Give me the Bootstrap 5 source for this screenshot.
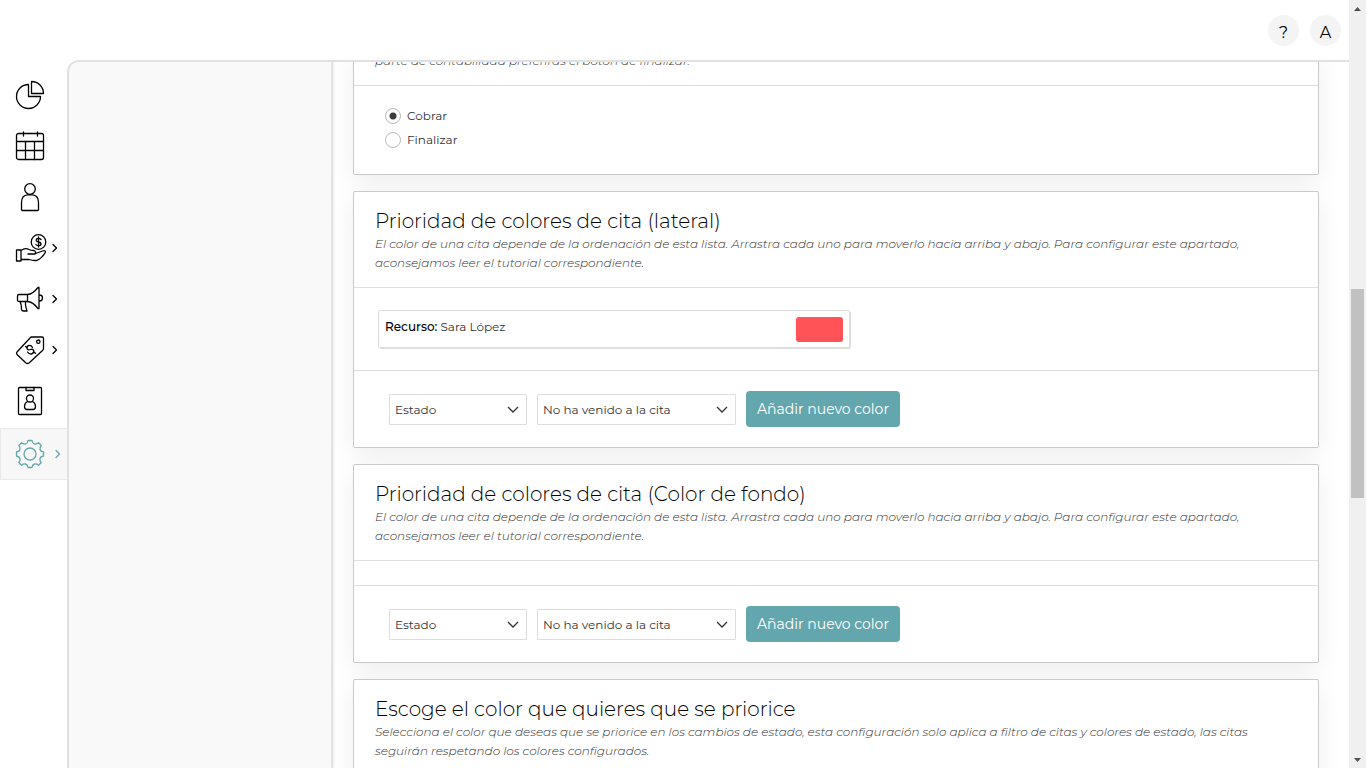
<!DOCTYPE html>
<html lang="es">
<head>
<meta charset="utf-8">
<meta name="viewport" content="width=device-width, initial-scale=1">
<title>Configuración de citas</title>
<link href="https://cdn.jsdelivr.net/npm/bootstrap@5.3.0/dist/css/bootstrap.min.css" rel="stylesheet">
<style>
  body { font-family: Montserrat, Inter, "Liberation Sans", sans-serif; font-size: 12px; color: #333; background: #fff; }
  .topbar { height: 60px; padding-right: 8px; gap: 11px; }
  .round-btn { width: 31px; height: 31px; border: 0; border-radius: 50%; background: #f4f4f4; color: #000; font-size: 16px; line-height: 31px; padding: 2px 0 0; }
  .side { width: 67px; padding-top: 9px; }
  .side a { height: 51px; padding-left: 15px; gap: 5px; color: #000; }
  .side a.active { height: 52px; margin-top: 2px; padding-left: 14px; gap: 8px; color: #64a6ad; background: #f7f7f7; border: 1px solid #e9e9e9; border-right: 0; }
  .side svg { flex: none; fill: none; stroke: currentColor; stroke-width: 1.3; stroke-linejoin: round; stroke-linecap: round; }
  .panel { min-width: 0; border: solid #e1e1e1; border-width: 2px 0 0 2px; border-top-left-radius: 12px; overflow: hidden; }
  .submenu { width: 264px; background: #f9f9f9; border-right: 2px solid #e3e3e3; box-shadow: 0 0 3px #ddd; }
  .stack { min-width: 0; padding: 0 30px 0 20px; overflow: hidden; }
  .stack-scroll { margin-top: -12px; gap: 16px; }
  .block { flex: none; border: 1px solid #c9c9c9; border-radius: 2px; background: #fff; box-shadow: 0 8px 26px rgba(0,0,0,.07); }
  .block-head { padding: 16px 21px 15px; }
  .block-head.cut { padding-top: 0; }
  .block h2 { margin: 0; font-size: 20px; line-height: 26px; font-weight: 300; color: #000; }
  .block p { margin: 0; font-size: 12px; line-height: 19px; font-weight: 300; font-style: italic; color: #333; }
  .block-list, .block-foot, .block-radios { border-top: 1px solid #dedede; }
  .block-list { padding: 12px 24px; }
  .block-foot { padding: 20px 35px; gap: 10px; }
  .block-radios { padding: 18px 31px 22px; }
  .choice { height: 24px; gap: 6px; }
  .choice .form-check-input { width: 16px; height: 16px; margin: 0; border: 1px solid #bbb; background-color: #fff; }
  .choice .form-check-input:checked { background-image: radial-gradient(circle, #3c3c3c 3px, transparent 4px); }
  .color-item { width: 472px; max-width: 100%; height: 38px; margin: 10px 0; padding: 0 6px; border: 1px solid #ddd; border-radius: 2px; box-shadow: 1px 1px 0 #ddd; }
  .color-item strong { font-weight: 500; color: #000; }
  .color-item span { font-weight: 400; padding-bottom: 4px; }
  .swatch { width: 47px; height: 25px; border: 0; border-radius: 3px; background: #ff5358; }
  .pick { height: 31px; padding: 0 24px 0 5px; border: 1px solid #ddd; border-radius: 1px; font-size: 12px; line-height: 29px; font-weight: 400; color: #333; background-image: url("data:image/svg+xml,%3csvg xmlns='http://www.w3.org/2000/svg' viewBox='0 0 12 12'%3e%3cpath fill='none' stroke='%23333' stroke-width='1.3' d='M1 4l5 5 5-5'/%3e%3c/svg%3e"); background-position: right 7px center; background-size: 12px; }
  .pick-kind { width: 138px; }
  .pick-value { width: 199px; }
  .btn-add { width: 154px; height: 36px; padding: 0; border: 0; border-radius: 4px; background: #64a6ad; color: #fff; font-size: 14px; white-space: nowrap; }
  .btn-add:hover { background: #568f96; color: #fff; }
  .track { width: 17px; background: #f0f0f0; }
  .track i { position: relative; flex: none; height: 17px; }
  .track i::before { content: ""; display: block; margin: 7px auto 0; width: 7px; height: 4px; background: #505050; clip-path: polygon(50% 0, 100% 100%, 0 100%); }
  .track i.down::before { clip-path: polygon(0 0, 100% 0, 50% 100%); }
  .track-rail { padding: 0 2px; }
  .track-thumb { background: #c1c1c1; }
</style>
</head>
<body class="vh-100 overflow-hidden d-flex">
<div class="d-flex flex-column flex-grow-1 overflow-hidden">
  <header class="topbar d-flex flex-shrink-0 align-items-center justify-content-end">
    <button class="round-btn" type="button" title="Ayuda">?</button>
    <button class="round-btn" type="button" title="Cuenta">A</button>
  </header>
  <div class="d-flex flex-grow-1 overflow-hidden">
    <nav class="side flex-shrink-0" aria-label="Principal">
      <a href="#" class="d-flex align-items-center" aria-label="Informes">
        <svg width="30" height="30" viewBox="0 0 30 30"><path d="M13.500 4.500A12 12 0 1 0 25.500 16.500H13.500ZM16.500 1.500V13.500H28.500A12 12 0 0 0 16.500 1.500Z"/></svg>
      </a>
      <a href="#" class="d-flex align-items-center" aria-label="Agenda">
        <svg width="30" height="30" viewBox="0 0 30 30"><rect x="1.500" y="2.500" width="27" height="26" rx="2"/><path d="M1.500 10.500H28.500M1.500 19.500H28.500M10.500 10.500V28.500M19.500 10.500V28.500M8.500 1V5M22.500 1V5"/></svg>
      </a>
      <a href="#" class="d-flex align-items-center" aria-label="Clientes">
        <svg width="30" height="30" viewBox="0 0 30 30"><circle cx="15" cy="7" r="5.300"/><path d="M6.500 28V21Q6.500 13 12.500 12.800H17.500Q23.500 13 23.500 21V28Q23.500 28.500 22.500 28.500H7.500Q6.500 28.500 6.500 28Z"/></svg>
      </a>
      <a href="#" class="d-flex align-items-center" aria-label="Ventas">
        <svg width="32" height="30" viewBox="0 0 32 30"><circle cx="23.500" cy="9" r="7.300"/><path d="M26 6.500Q25 5.400 23.500 5.400Q21.200 5.400 21.200 7.200Q21.200 8.600 23.500 9Q26 9.400 26 11Q26 12.700 23.500 12.700Q21.700 12.700 20.900 11.500M23.500 4V14M1.500 17H6V28H1.500ZM6 17.500Q10 14.500 14 16.500Q16 17.600 19 17.500Q21.500 18.500 20 21H13M20.500 20.500L27.500 18Q30.500 17 30.500 19Q27 25.500 22 27.300Q19 28 14 26.500H6"/></svg>
        <svg width="6" height="10" viewBox="0 0 6 10"><path d="M1 1.500L4.500 5L1 8.500"/></svg>
      </a>
      <a href="#" class="d-flex align-items-center" aria-label="Marketing">
        <svg width="32" height="30" viewBox="0 0 32 30"><path d="M4 10.500H12.500V17.500H4Q2.500 17.500 2.500 16V12Q2.500 10.500 4 10.500ZM12.500 10.500Q18 10 22.500 4Q24 2.500 24 4V24Q24 25.500 22.500 24Q18 18 12.500 17.500M24.500 11Q27.500 11 27.500 14T24.500 17M5 17.500Q6.500 20 6.500 25.500Q7 27 8.500 27H12Q11 24 10.500 21V17.500"/></svg>
        <svg width="6" height="10" viewBox="0 0 6 10"><path d="M1 1.500L4.500 5L1 8.500"/></svg>
      </a>
      <a href="#" class="d-flex align-items-center" aria-label="Bonos y tarifas">
        <svg width="32" height="30" viewBox="0 0 32 30"><path d="M16.500 2H27Q28.500 2 28.500 3.500V13.500Q28.500 14.500 27.500 15.500L14 28Q12.500 29 11 28L2 19.500Q1 18 2 17L15 3Q15.700 2 16.500 2Z"/><circle cx="23.300" cy="6.700" r="1.700"/><path d="M17.500 12.500Q16 9.800 13.200 10.600Q11 12 12.200 14Q13.500 15.300 15.500 14.500Q18 13.700 18.800 15.800Q19 18.300 16.500 19Q14 19.200 12.500 17M10.500 11.500L12.300 12.600M18.700 17L20.500 18.300"/></svg>
        <svg width="6" height="10" viewBox="0 0 6 10"><path d="M1 1.500L4.500 5L1 8.500"/></svg>
      </a>
      <a href="#" class="d-flex align-items-center" aria-label="Personal">
        <svg width="30" height="30" viewBox="0 0 30 30"><rect x="3.500" y="1.500" width="23" height="27" rx="1"/><path d="M11 1.500V4.500H19V1.500"/><circle cx="15" cy="12.500" r="3.500"/><path d="M12.500 15.500Q9.500 17 9.500 20.500Q9.500 23.500 12 23.500H18Q20.500 23.500 20.500 20.500Q20.500 17 17.500 15.500"/></svg>
      </a>
      <a href="#" class="active d-flex align-items-center" aria-label="Configuración" aria-current="page">
        <svg width="32" height="30" viewBox="0 0 32 30"><circle cx="15" cy="15" r="6"/><path d="M13 1.500H17Q17.500 4.500 19.500 5Q21.500 5.500 23.500 3.800L26.200 6.500Q24.500 8.500 25 10.500Q25.500 12.500 28.500 13V17Q25.500 17.500 25 19.500Q24.500 21.500 26.200 23.500L23.500 26.200Q21.500 24.500 19.500 25Q17.500 25.500 17 28.500H13Q12.500 25.500 10.500 25Q8.500 24.500 6.500 26.200L3.800 23.500Q5.500 21.500 5 19.500Q4.500 17.500 1.500 17V13Q4.500 12.500 5 10.500Q5.500 8.500 3.800 6.500L6.500 3.800Q8.500 5.500 10.500 5Q12.500 4.500 13 1.500Z"/></svg>
        <svg width="6" height="10" viewBox="0 0 6 10"><path d="M1 1.500L4.500 5L1 8.500"/></svg>
      </a>
    </nav>
    <div class="panel d-flex flex-grow-1">
      <aside class="submenu flex-shrink-0"></aside>
      <main class="stack flex-grow-1">
        <div class="stack-scroll d-flex flex-column">
          <section class="block">
            <div class="block-head cut"><p>parte de contabilidad preferirás el botón de finalizar.</p></div>
            <div class="block-radios">
              <div class="choice d-flex align-items-center"><input class="form-check-input" type="radio" name="accion" id="cobrar" checked><label for="cobrar">Cobrar</label></div>
              <div class="choice d-flex align-items-center"><input class="form-check-input" type="radio" name="accion" id="finalizar"><label for="finalizar">Finalizar</label></div>
            </div>
          </section>
          <section class="block">
            <div class="block-head">
              <h2>Prioridad de colores de cita (lateral)</h2>
              <p>El color de una cita depende de la ordenación de esta lista. Arrastra cada uno para moverlo hacia arriba y abajo. Para configurar este apartado, aconsejamos leer el tutorial correspondiente.</p>
            </div>
            <div class="block-list">
              <div class="color-item d-flex align-items-center justify-content-between">
                <span><strong>Recurso:</strong> Sara López</span>
                <button class="swatch" type="button" aria-label="Color de Sara López"></button>
              </div>
            </div>
            <div class="block-foot d-flex align-items-center">
              <select class="form-select pick pick-kind" aria-label="Tipo"><option>Estado</option></select>
              <select class="form-select pick pick-value" aria-label="Valor"><option>No ha venido a la cita</option></select>
              <button class="btn btn-add" type="button">Añadir nuevo color</button>
            </div>
          </section>
          <section class="block">
            <div class="block-head">
              <h2>Prioridad de colores de cita (Color de fondo)</h2>
              <p>El color de una cita depende de la ordenación de esta lista. Arrastra cada uno para moverlo hacia arriba y abajo. Para configurar este apartado, aconsejamos leer el tutorial correspondiente.</p>
            </div>
            <div class="block-list"></div>
            <div class="block-foot d-flex align-items-center">
              <select class="form-select pick pick-kind" aria-label="Tipo"><option>Estado</option></select>
              <select class="form-select pick pick-value" aria-label="Valor"><option>No ha venido a la cita</option></select>
              <button class="btn btn-add" type="button">Añadir nuevo color</button>
            </div>
          </section>
          <section class="block">
            <div class="block-head">
              <h2>Escoge el color que quieres que se priorice</h2>
              <p>Selecciona el color que deseas que se priorice en los cambios de estado, esta configuración solo aplica a filtro de citas y colores de estado, las citas seguirán respetando los colores configurados.</p>
            </div>
            <div class="block-list"></div>
          </section>
        </div>
      </main>
    </div>
  </div>
</div>
<div class="track d-flex flex-column flex-shrink-0" aria-hidden="true">
  <i></i>
  <div class="track-rail flex-grow-1 d-flex flex-column">
    <div style="height:37%"></div>
    <div class="track-thumb" style="height:28.500%"></div>
  </div>
  <i class="down"></i>
</div>
<script src="https://cdn.jsdelivr.net/npm/bootstrap@5.3.0/dist/js/bootstrap.bundle.min.js"></script>
</body>
</html>
